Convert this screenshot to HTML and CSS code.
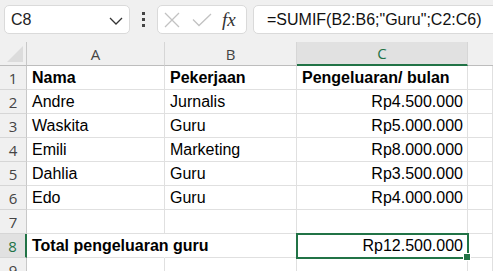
FILE: index.html
```html
<!DOCTYPE html>
<html lang="id">
<head>
    <meta charset="UTF-8">
    <meta name="viewport" content="width=device-width, initial-scale=1.0">
    <title>SUMIF pengeluaran guru</title>
    <link rel="stylesheet" href="styles.css">
</head>
<body>
    <div class="topbar">
        <div class="name-box">
            <span class="name-text">C8</span>
            <svg class="chevron" width="14" height="8" viewBox="0 0 14 8">
                <path d="M1 1 L7 7 L13 1" fill="none" stroke="#333" stroke-width="1.3"/>
            </svg>
        </div>
        <div class="dots">
            <span></span><span></span><span></span>
        </div>
        <div class="icon-box">
            <svg class="icon" width="16" height="16" viewBox="0 0 16 16">
                <path d="M1 1 L15 15 M15 1 L1 15" stroke="#c2c2c2" stroke-width="1.3" fill="none"/>
            </svg>
            <svg class="icon" width="20" height="14" viewBox="0 0 20 14">
                <path d="M1 6.5 L7 12.5 L19 1" stroke="#c2c2c2" stroke-width="1.3" fill="none"/>
            </svg>
            <span class="fx">fx</span>
        </div>
        <div class="formula-box">=SUMIF(B2:B6;"Guru";C2:C6)</div>
    </div>

    <div class="sheet">
        <div class="corner"><div class="triangle"></div></div>
        <div class="col-head">A</div>
        <div class="col-head">B</div>
        <div class="col-head active">C</div>
        <div class="col-head last"></div>

        <div class="row-head">1</div>
        <div class="cell bold">Nama</div>
        <div class="cell bold">Pekerjaan</div>
        <div class="cell bold">Pengeluaran/ bulan</div>
        <div class="cell"></div>

        <div class="row-head">2</div>
        <div class="cell">Andre</div>
        <div class="cell">Jurnalis</div>
        <div class="cell num">Rp4.500.000</div>
        <div class="cell"></div>

        <div class="row-head">3</div>
        <div class="cell">Waskita</div>
        <div class="cell">Guru</div>
        <div class="cell num">Rp5.000.000</div>
        <div class="cell"></div>

        <div class="row-head">4</div>
        <div class="cell">Emili</div>
        <div class="cell">Marketing</div>
        <div class="cell num">Rp8.000.000</div>
        <div class="cell"></div>

        <div class="row-head">5</div>
        <div class="cell">Dahlia</div>
        <div class="cell">Guru</div>
        <div class="cell num">Rp3.500.000</div>
        <div class="cell"></div>

        <div class="row-head">6</div>
        <div class="cell">Edo</div>
        <div class="cell">Guru</div>
        <div class="cell num">Rp4.000.000</div>
        <div class="cell"></div>

        <div class="row-head">7</div>
        <div class="cell"></div>
        <div class="cell"></div>
        <div class="cell"></div>
        <div class="cell"></div>

        <div class="row-head active">8</div>
        <div class="cell bold span-b">Total pengeluaran guru</div>
        <div class="cell"></div>
        <div class="cell num selected">Rp12.500.000</div>
        <div class="cell"></div>

        <div class="row-head">9</div>
        <div class="cell"></div>
        <div class="cell"></div>
        <div class="cell"></div>
        <div class="cell"></div>
    </div>
</body>
</html>
```

FILE: styles.css
```css
body {
    margin: 0;
    background-color: #f0f0f0;
    font-family: 'Liberation Sans', Arial, sans-serif;
    overflow: hidden;
}
.topbar {
    height: 42px;
    display: flex;
    align-items: flex-start;
    padding-top: 5px;
    box-sizing: border-box;
    background-color: #f0f0f0;
}
.name-box {
    width: 126px;
    height: 29px;
    margin-left: 4px;
    box-sizing: border-box;
    background-color: white;
    border: 1px solid #dadada;
    border-radius: 5px;
    display: flex;
    align-items: center;
    justify-content: space-between;
    padding: 0 6px 0 6px;
    font-size: 16px;
    color: #222;
}
.chevron {
    margin-top: 2px;
}
.dots {
    width: 27px;
    height: 29px;
    display: flex;
    flex-direction: column;
    align-items: center;
    justify-content: center;
    gap: 3px;
}
.dots span {
    width: 3px;
    height: 3px;
    background-color: #444;
}
.icon-box {
    width: 90px;
    height: 29px;
    box-sizing: border-box;
    background-color: white;
    border: 1px solid #dadada;
    border-radius: 5px;
    display: flex;
    align-items: center;
    padding-left: 6px;
    gap: 12px;
}
.fx {
    font-family: 'Liberation Serif', 'Times New Roman', serif;
    font-style: italic;
    font-size: 19px;
    color: #333;
    margin-left: -2px;
}
.formula-box {
    flex: 1;
    height: 29px;
    margin-left: 6px;
    margin-right: -10px;
    box-sizing: border-box;
    background-color: white;
    border: 1px solid #dadada;
    border-radius: 5px;
    display: flex;
    align-items: center;
    padding-left: 13px;
    font-size: 16px;
    color: #111;
}
.sheet {
    display: grid;
    grid-template-columns: 27px 138px 132px 171px 25px;
    grid-template-rows: 24px repeat(9, 24px);
    background-color: white;
}
.corner {
    background-color: #f0f0f0;
    border-right: 1px solid #c8c8c8;
    border-bottom: 1px solid #bdbdbd;
    display: flex;
    align-items: flex-end;
    justify-content: flex-end;
    padding: 0 3px 3px 0;
}
.triangle {
    width: 0;
    height: 0;
    border-left: 16px solid transparent;
    border-bottom: 16px solid #dcdcdc;
}
.col-head {
    background-color: #f0f0f0;
    border-right: 1px solid #d6d6d6;
    border-bottom: 1px solid #bdbdbd;
    display: flex;
    align-items: center;
    justify-content: center;
    font-family: 'Open Sans', 'Noto Sans', sans-serif;
    font-size: 15px;
    color: #444;
}
.col-head.active {
    background-color: #e1e1e1;
    border-bottom: 2px solid #217346;
    color: #217346;
}
.col-head.last {
    border-right: none;
}
.row-head {
    background-color: #f0f0f0;
    border-right: 1px solid #c8c8c8;
    border-bottom: 1px solid #d6d6d6;
    display: flex;
    align-items: center;
    justify-content: center;
    font-family: 'Open Sans', 'Noto Sans', sans-serif;
    font-size: 15px;
    color: #444;
}
.row-head.active {
    background-color: #e1e1e1;
    border-right: 2px solid #217346;
    color: #217346;
}
.cell {
    border-right: 1px solid #e0e0e0;
    border-bottom: 1px solid #e0e0e0;
    display: flex;
    align-items: flex-end;
    padding: 0 4px 2px 5px;
    font-size: 16px;
    color: #000;
    white-space: nowrap;
    min-width: 0;
}
.bold {
    font-weight: bold;
}
.num {
    justify-content: flex-end;
}
.span-b {
    overflow: visible;
    border-right-color: transparent;
    position: relative;
    z-index: 1;
}
.selected {
    position: relative;
    outline: 2px solid #217346;
    outline-offset: -1px;
}
.selected::after {
    content: "";
    position: absolute;
    right: -4px;
    bottom: -4px;
    width: 6px;
    height: 6px;
    background-color: #217346;
    border: 1px solid white;
}
```
